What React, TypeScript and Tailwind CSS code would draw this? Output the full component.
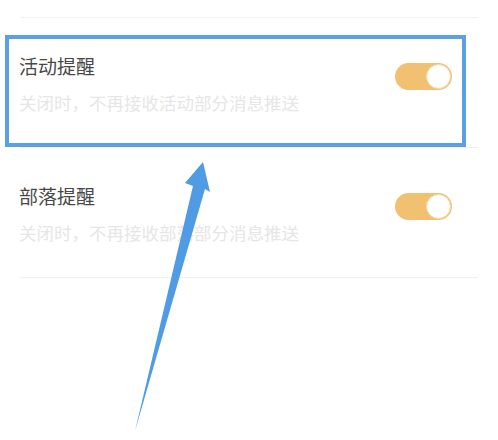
import React from "react";

function Toggle() {
  return (
    <div className="mt-[10px] relative w-[57px] h-[27px] rounded-full bg-[#f2c071] shrink-0">
      <div className="absolute right-[1px] top-[1px] w-[25px] h-[25px] rounded-full bg-white border border-[#f3d9a6]" />
    </div>
  );
}

function Row({ title, sub }: { title: string; sub: string }) {
  return (
    <div className="flex items-start justify-between pl-[19px] pr-[46px] pt-[35px] pb-[32px]">
      <div className="flex flex-col">
        <div className="text-[19px] leading-[26px] text-[#484848]">{title}</div>
        <div className="mt-[12px] text-[17.5px] leading-[24px] text-[#e6e6e6]">{sub}</div>
      </div>
      <Toggle />
    </div>
  );
}

export default function App() {
  return (
    <div
      className="relative w-[498px] h-[440px] bg-white overflow-hidden"
      style={{ fontFamily: '"Noto Sans CJK SC", "Noto Sans", sans-serif' }}
    >
      <div className="h-[17px]" />
      <div className="mx-[20px] h-px bg-[#f1f1f1]" />
      <Row title="活动提醒" sub="关闭时，不再接收活动部分消息推送" />
      <div className="mx-[20px] h-px bg-[#f1f1f1]" />
      <Row title="部落提醒" sub="关闭时，不再接收部落部分消息推送" />
      <div className="mx-[20px] h-px bg-[#f1f1f1]" />

      <div className="absolute left-[5px] top-[35px] w-[461px] h-[112px] border-[4px] border-[#5aa0e2]" />

      <svg className="absolute left-0 top-0" width="498" height="440" viewBox="0 0 498 440">
        <polygon
          points="203,162 210,192 205,189 135,431 193,186 185,183"
          fill="#4f9ce4"
        />
      </svg>
    </div>
  );
}
